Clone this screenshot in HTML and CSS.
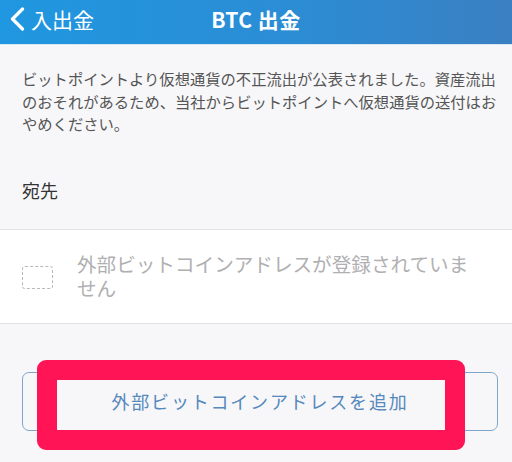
FILE: index.html
```html
<!DOCTYPE html>
<html lang="ja">
<head>
    <meta charset="UTF-8">
    <meta name="viewport" content="width=device-width, initial-scale=1.0">
    <title>BTC 出金</title>
    <link rel="stylesheet" href="styles.css">
</head>
<body>
    <header class="nav">
        <div class="nav-back">
            <svg width="16" height="24" viewBox="0 0 16 24"><path d="M13.5 2 L3.5 12 L13.5 22" fill="none" stroke="#fff" stroke-width="3.2" stroke-linecap="round" stroke-linejoin="round"/></svg>
            <span>入出金</span>
        </div>
        <h1 class="nav-title">BTC 出金</h1>
        <div></div>
    </header>

    <main class="page">
        <p class="notice">ビットポイントより仮想通貨の不正流出が公表されました。資産流出のおそれがあるため、当社からビットポイントへ仮想通貨の送付はおやめください。</p>

        <h2 class="section-label">宛先</h2>

        <div class="address-row">
            <div class="address-empty-icon"></div>
            <p class="address-empty-text">外部ビットコインアドレスが登録されていません</p>
        </div>

        <div class="add-wrap">
            <button class="add-button">外部ビットコインアドレスを追加</button>
            <div class="highlight"></div>
        </div>
    </main>
</body>
</html>
```

FILE: styles.css
```css
html, body {
    margin: 0;
    padding: 0;
}
body {
    font-family: "Noto Sans CJK JP", "Noto Sans", sans-serif;
    background-color: #f7f7f9;
    width: 512px;
    height: 462px;
    overflow: hidden;
}
.nav {
    height: 44px;
    display: grid;
    grid-template-columns: 1fr auto 1fr;
    align-items: center;
    background: linear-gradient(90deg, #1f97e0 0%, #2b8dd5 55%, #3a80c2 100%);
    color: #fff;
    border-bottom: 1px solid #d7e8f5;
}
.nav-back {
    display: flex;
    align-items: center;
    padding-left: 9px;
    gap: 6px;
    font-size: 21px;
    margin-top: -7px;
}
.nav-title {
    margin: -7px 0 0;
    font-family: "Noto Sans CJK JP", "Noto Sans", sans-serif;
    font-size: 21px;
    font-weight: bold;
    letter-spacing: 0.5px;
}
.page {
    padding-top: 22px;
}
.notice {
    margin: 0;
    padding: 0 14px 0 22px;
    font-size: 15.3px;
    line-height: 22.5px;
    color: #555;
}
.section-label {
    margin: 0;
    padding: 42px 22px 0;
    height: 52px;
    font-size: 18px;
    font-weight: normal;
    line-height: 26px;
    color: #333;
    box-sizing: content-box;
}
.address-row {
    display: flex;
    align-items: center;
    gap: 24px;
    height: 93px;
    padding: 0 26px 0 22px;
    background-color: #fff;
    border-top: 1px solid #e2e2e4;
    border-bottom: 1px solid #e2e2e4;
}
.address-empty-icon {
    flex: none;
    width: 29px;
    height: 21px;
    border: 1.5px dashed #b8b8b8;
    border-radius: 3px;
    margin-top: 2px;
}
.address-empty-text {
    margin: 0;
    font-size: 19.6px;
    line-height: 24px;
    color: #b0b0b2;
}
.add-wrap {
    position: relative;
    padding: 48px 14px 0 22px;
}
.add-button {
    display: block;
    width: 100%;
    height: 59px;
    background: transparent;
    border: 1.5px solid #7ea6cd;
    border-radius: 7px;
    font-family: "Noto Sans CJK JP", "Noto Sans", sans-serif;
    font-size: 18px;
    letter-spacing: 1.8px;
    color: #5588bb;
    padding: 0;
}
.highlight {
    position: absolute;
    left: 37px;
    top: 36px;
    width: 428px;
    height: 90px;
    box-sizing: border-box;
    border: 20px solid #ff1456;
    border-radius: 9px;
}
```
